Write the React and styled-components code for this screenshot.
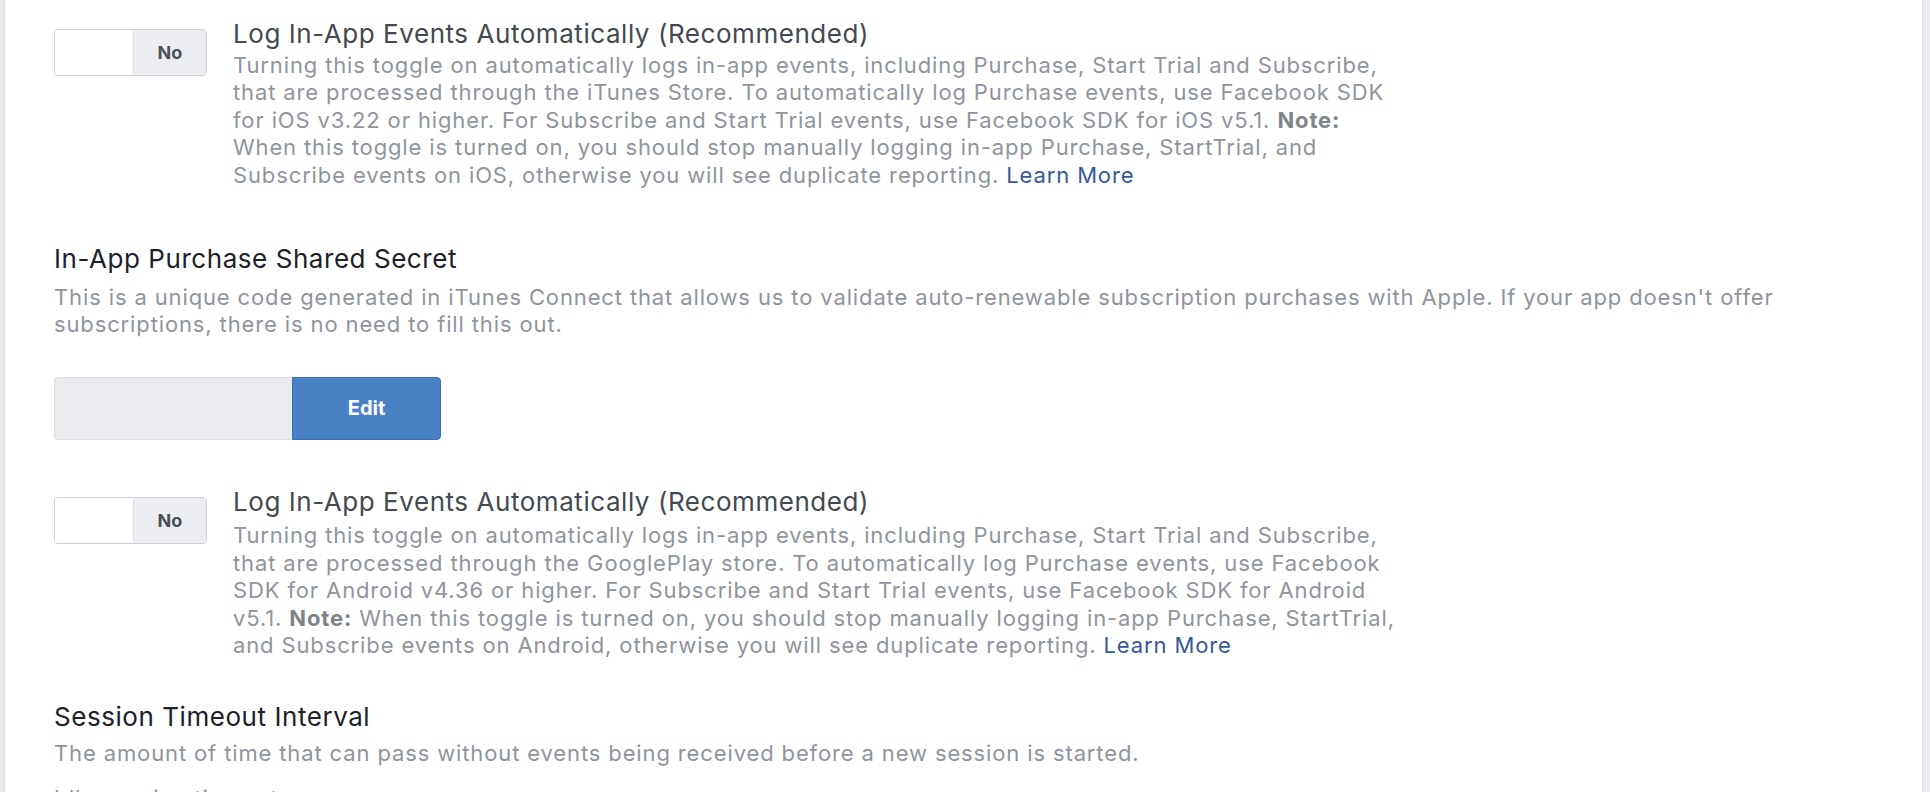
import React from 'react';
import styled, { createGlobalStyle } from 'styled-components';

const Global = createGlobalStyle`
  html, body { margin: 0; padding: 0; background: #e9ebee; }
  body { font-family: Inter, "Noto Sans", sans-serif; -webkit-font-smoothing: antialiased; }
`;

const Page = styled.div`
  height: 792px;
  overflow: hidden;
  padding: 0 7px 0 4px;
  box-sizing: border-box;
`;

const Panel = styled.div`
  height: 100%;
  box-sizing: border-box;
  background: #fff;
  border-left: 1px solid #dddfe2;
  border-right: 1px solid #dddfe2;
  padding: 17.5px 0 0 49px;
`;

const ToggleRow = styled.div`
  display: flex;
  align-items: flex-start;
  gap: 26px;
  margin-top: ${(p) => p.$top || 0}px;
`;

const Toggle = styled.div`
  margin-top: ${(p) => p.$offset}px;
  width: 153px;
  height: 47px;
  box-sizing: border-box;
  border: 1px solid #ccd0d5;
  border-radius: 4px;
  display: flex;
  overflow: hidden;
  flex-shrink: 0;
`;

const Knob = styled.div`
  width: 78px;
  background: #fff;
  border-right: 1px solid #dddfe2;
  border-radius: 3px;
`;

const ToggleLabel = styled.div`
  flex: 1;
  background: #ebedf0;
  display: flex;
  align-items: center;
  justify-content: center;
  font-weight: 700;
  font-size: 18px;
  color: #4b4f56;
`;

const TextCol = styled.div`
  display: flex;
  flex-direction: column;
`;

const Title = styled.div`
  font-size: 26px;
  line-height: 32px;
  letter-spacing: 0.55px;
  color: ${(p) => p.$color || '#1d2129'};
`;

const Desc = styled.div`
  margin-top: ${(p) => p.$gap ?? 2.5}px;
  font-size: 22px;
  line-height: 27.5px;
  letter-spacing: 0.87px;
  color: #90949c;
  white-space: nowrap;
  b { font-weight: 700; color: #7f838a; }
`;

const Link = styled.a`
  color: #385898;
  text-decoration: none;
`;

const Section = styled.div`
  margin-top: ${(p) => p.$top || 0}px;
`;

const InputGroup = styled.div`
  margin-top: 38px;
  display: flex;
  height: 63px;
  width: 387px;
`;

const Field = styled.div`
  flex: 0 0 238px;
  box-sizing: border-box;
  background: #e9ebee;
  border: 1px solid #dddfe2;
  border-right: none;
  border-radius: 4px 0 0 4px;
`;

const EditButton = styled.button`
  flex: 1;
  background: #4a80c4;
  border: 1px solid #3b6fb3;
  border-radius: 0 4px 4px 0;
  color: #fff;
  font-family: inherit;
  font-weight: 700;
  font-size: 20px;
  padding: 0;
`;

function ToggleBlock({ top, offset, gap, children, title }) {
  return (
    <ToggleRow $top={top}>
      <Toggle $offset={offset}>
        <Knob />
        <ToggleLabel>No</ToggleLabel>
      </Toggle>
      <TextCol>
        <Title $color="#444950">{title}</Title>
        <Desc $gap={gap}>{children}</Desc>
      </TextCol>
    </ToggleRow>
  );
}

export default function App() {
  return (
    <Page>
      <Global />
      <Panel>
        <ToggleBlock offset={11.5} gap={2} title="Log In-App Events Automatically (Recommended)">
          Turning this toggle on automatically logs in-app events, including Purchase, Start Trial and Subscribe,<br />
          that are processed through the iTunes Store. To automatically log Purchase events, use Facebook SDK<br />
          for iOS v3.22 or higher. For Subscribe and Start Trial events, use Facebook SDK for iOS v5.1. <b>Note:</b><br />
          When this toggle is turned on, you should stop manually logging in-app Purchase, StartTrial, and<br />
          Subscribe events on iOS, otherwise you will see duplicate reporting. <Link href="#">Learn More</Link>
        </ToggleBlock>

        <Section $top={53.5}>
          <Title>In-App Purchase Shared Secret</Title>
          <Desc $gap={9}>
            This is a unique code generated in iTunes Connect that allows us to validate auto-renewable subscription purchases with Apple. If your app doesn't offer<br />
            subscriptions, there is no need to fill this out.
          </Desc>
          <InputGroup>
            <Field />
            <EditButton>Edit</EditButton>
          </InputGroup>
        </Section>

        <ToggleBlock top={46} offset={11} gap={4.5} title="Log In-App Events Automatically (Recommended)">
          Turning this toggle on automatically logs in-app events, including Purchase, Start Trial and Subscribe,<br />
          that are processed through the GooglePlay store. To automatically log Purchase events, use Facebook<br />
          SDK for Android v4.36 or higher. For Subscribe and Start Trial events, use Facebook SDK for Android<br />
          v5.1. <b>Note:</b> When this toggle is turned on, you should stop manually logging in-app Purchase, StartTrial,<br />
          and Subscribe events on Android, otherwise you will see duplicate reporting. <Link href="#">Learn More</Link>
        </ToggleBlock>

        <Section $top={41}>
          <Title>Session Timeout Interval</Title>
          <Desc $gap={7}>
            The amount of time that can pass without events being received before a new session is started.
          </Desc>
          <Desc $gap={18}>Idle session timeout</Desc>
        </Section>
      </Panel>
    </Page>
  );
}
